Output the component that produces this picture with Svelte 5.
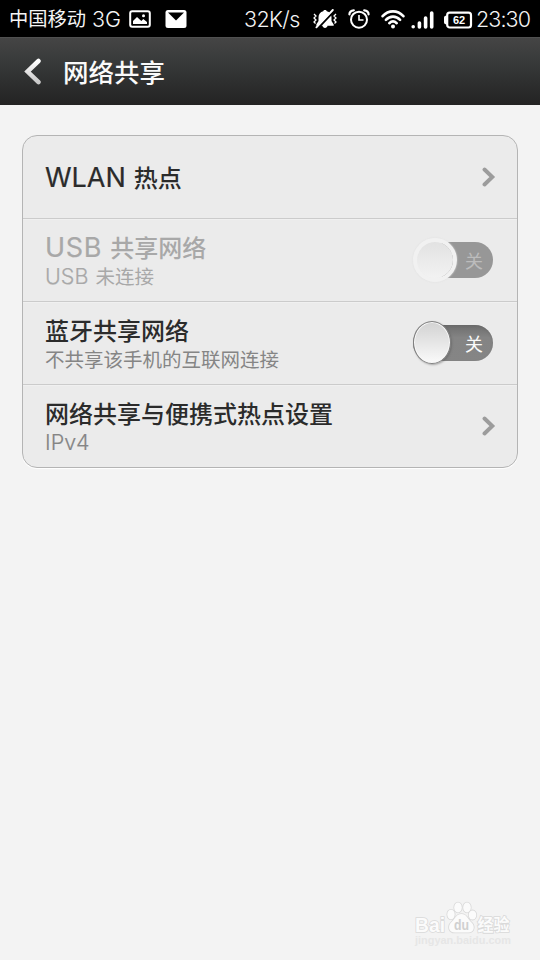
<script>
  const rows = [
    { latin: 'WLAN', title: '热点', kind: 'link' },
    { latin: 'USB', title: '共享网络', subLatin: 'USB', sub: '未连接', kind: 'toggle', disabled: true },
    { title: '蓝牙共享网络', sub: '不共享该手机的互联网连接', kind: 'toggle' },
    { title: '网络共享与便携式热点设置', subLatin: 'IPv4', kind: 'link' },
  ];
</script>

<div class="screen">
  <div class="status">
    <span class="carrier">中国移动</span>
    <span class="lat net">3G</span>
    <svg class="pic" width="22" height="18" viewBox="0 0 22 18">
      <rect x="1.2" y="1.2" width="19.6" height="15.6" rx="2" fill="none" stroke="#fff" stroke-width="2" />
      <path d="M4 14V11L8 7l4.300 4 2-2L18 12v2z" fill="#fff" />
      <circle cx="14.500" cy="5.800" r="1.500" fill="#fff" />
    </svg>
    <svg class="mail" width="22" height="18" viewBox="0 0 22 18">
      <rect x=".5" width="21" height="18" rx="2.500" fill="#fff" />
      <path d="M3 2.600h16L11 10.400z" fill="#000" />
    </svg>
    <span class="lat speed">32K/s</span>
    <svg class="mute" width="24" height="20" viewBox="0 0 24 20">
      <path d="M12 1c1.200 0 1.600.6 1.800 1.300 3 .8 4.700 3 4.700 6v3.700l2.200 3.500v1.300H14.500c-.2 1.400-1.200 2.100-2.500 2.100s-2.300-.7-2.500-2.100H3.300v-1.300L5.500 12V8.300c0-3 1.700-5.200 4.700-6 .2-.7.6-1.300 1.800-1.300z" fill="#fff" />
      <path d="M4.500 19.500L21 2" stroke="#000" stroke-width="2.400" />
      <path d="M3.400 18.300L19.800 1" stroke="#fff" stroke-width="1.900" stroke-linecap="round" />
      <path d="M1 5l2 2-2 2 2 2-2 2 1.500 1.500M23 5l-2 2 2 2-2 2 2 2-1.500 1.500" stroke="#fff" stroke-width="1.300" fill="none" />
    </svg>
    <svg class="alarm" width="22" height="20" viewBox="0 0 22 20">
      <circle cx="11" cy="10.700" r="8" fill="none" stroke="#fff" stroke-width="2" />
      <path d="M11 6v5h4.500" fill="none" stroke="#fff" stroke-width="1.600" />
      <path d="M1.400 5.400C1.500 3 3 1.500 5.800 1.300M20.600 5.400C20.500 3 19 1.500 16.200 1.300" fill="none" stroke="#fff" stroke-width="2.200" stroke-linecap="round" />
    </svg>
    <svg class="wifi" width="24" height="19" viewBox="0 0 24 19">
      <g fill="none" stroke="#fff" stroke-width="2.600" stroke-linecap="round">
        <path d="M1.600 6.200C7.500-.2 16.500-.2 22.400 6.200" />
        <path d="M4.900 9.900c4.200-4.400 10-4.400 14.200 0" />
        <path d="M8.300 13.200c2.300-2.200 5.100-2.200 7.400 0" />
      </g>
      <circle cx="12" cy="16.600" r="2" fill="#fff" />
    </svg>
    <svg class="signal" width="23" height="18" viewBox="0 0 23 18">
      <path d="M2.200 15.700v.1M8.400 12v4M14.600 7v9M20.700 2v14" stroke="#fff" stroke-width="3.600" stroke-linecap="round" />
    </svg>
    <svg class="battery" width="30" height="18" viewBox="0 0 30 18">
      <rect x="4.200" y="1.700" width="23.800" height="14.800" rx="2.500" fill="none" stroke="#fff" stroke-width="2.200" />
      <path d="M4 4.500C1.500 4.500 1 5.500 1 7v4c0 1.500.5 2.500 3 2.500z" fill="#fff" />
      <text x="16" y="12.900" text-anchor="middle">62</text>
    </svg>
    <span class="lat time">23:30</span>
  </div>

  <header>
    <svg width="20" height="28" viewBox="0 0 20 28">
      <defs>
        <linearGradient id="arrow" x1="0" y1="0" x2="0" y2="1"><stop offset="0" stop-color="#fff" /><stop offset="1" stop-color="#c8c8c8" /></linearGradient>
      </defs>
      <path d="M16.500 3L5.500 13.500l11 10.600" fill="none" stroke="url(#arrow)" stroke-width="4.500" stroke-linecap="round" />
    </svg>
    <h1>网络共享</h1>
  </header>

  <main>
    {#each rows as row}
      <section class:disabled={row.disabled}>
        <div class="copy">
          <div class="title">{#if row.latin}<span class="lat">{row.latin}</span>{/if}{row.title}</div>
          {#if row.sub || row.subLatin}
            <div class="sub">{#if row.subLatin}<span class="lat">{row.subLatin}</span>{/if}{row.sub ?? ''}</div>
          {/if}
        </div>
        {#if row.kind === 'link'}
          <svg class="chev" width="14" height="20" viewBox="0 0 14 20"><path d="M2.500 2.500L10.300 10l-7.800 7.500" fill="none" stroke="#9c9c9c" stroke-width="3.900" stroke-linecap="round" /></svg>
        {:else}
          <div class="toggle"><div class="track">关</div><i class="knob"></i></div>
        {/if}
      </section>
    {/each}
  </main>

  <svg class="mark" width="110" height="50" viewBox="0 0 110 50">
    <g fill="#fbfbfb" stroke="#d9d9d9" stroke-width="1.600" paint-order="stroke">
      <text class="brand" x="4" y="33" textLength="30" lengthAdjust="spacingAndGlyphs">Bai</text>
      <ellipse cx="40" cy="15.500" rx="3.700" ry="4.800" /><ellipse cx="47" cy="8.500" rx="3.800" ry="5" />
      <ellipse cx="56" cy="8.500" rx="3.800" ry="5" /><ellipse cx="61.500" cy="16" rx="3.800" ry="4.600" />
      <path d="M50.500 15c5 0 6 4.500 9 7.500 5.500 4.500 3.500 11-2 11H44c-6.500 0-8-6.500-3-11 4-3.500 4-7.500 9.500-7.500z" />
      <text class="jy" x="66.500" y="32" textLength="32" lengthAdjust="spacingAndGlyphs">经验</text>
    </g>
    <text class="du" x="43" y="31" textLength="15" lengthAdjust="spacingAndGlyphs">du</text>
    <text class="url" x="4" y="45" textLength="96" lengthAdjust="spacingAndGlyphs">jingyan.baidu.com</text>
  </svg>
</div>

<style>
  :global(body) { margin: 0; background: #f3f3f3; }
  .screen { position: relative; width: 540px; height: 960px; overflow: hidden; background: #f3f3f3; font-family: 'Noto Sans CJK SC', sans-serif; }
  .lat { font-family: Inter, 'Liberation Sans', sans-serif; }
  .status { height: 37px; background: #000; color: #f5f5f5; display: flex; align-items: center; padding-left: 9px; box-sizing: border-box; white-space: nowrap; }
  .status > * { flex: none; }
  .carrier { width: 83px; font-size: 19.300px; line-height: 37px; font-weight: 400; }
  .net, .speed, .time { font-size: 21.500px; font-weight: 300; line-height: 37px; margin-top: 2px; }
  .net { width: 37px; }
  .mail { margin-left: 14px; }
  .speed { margin-left: 57px; width: 69px; letter-spacing: -.6px; }
  .mute { width: 24px; }
  .alarm { margin-left: 11px; }
  .wifi { margin-left: 11px; margin-top: 1px; }
  .signal { margin-left: 6px; margin-top: 2px; }
  .battery { margin-left: 9px; margin-top: 2px; }
  .battery text { font: bold 11px 'Liberation Sans', sans-serif; fill: #fff; }
  .time { margin-left: 3px; letter-spacing: -.9px; }
  header { height: 68px; display: flex; align-items: center; background: linear-gradient(#454545, #383a3a 35%, #232323); border-top: 1px solid #505050; box-sizing: border-box; padding-left: 22px; }
  h1 { margin: -2px 0 0 21px; color: #fafafa; font-size: 25.500px; font-weight: 500; line-height: 40px; }
  main { margin: 30px 22px 0; height: 333px; box-sizing: border-box; border: 1px solid #b4b4b4; border-radius: 15px; background: #ebebeb; box-shadow: 0 1px 1px #fff; display: flex; flex-direction: column; }
  section { flex: 1; display: flex; align-items: center; justify-content: space-between; padding: 0 22px; box-sizing: border-box; }
  section:first-child { flex: 0 0 82px; }
  section + section { border-top: 1px solid #cbcbcb; box-shadow: inset 0 1px #f0f0f0; }
  .title { color: #2b2b2b; font-size: 24px; line-height: 32px; font-weight: 500; white-space: nowrap; }
  .title .lat { font-size: 27px; font-weight: 400; margin-right: 8px; line-height: 30px; -webkit-text-stroke: .2px currentColor; }
  .sub { color: #858585; font-size: 19.500px; line-height: 26px; font-weight: 400; white-space: nowrap; }
  .sub .lat { font-size: 21.500px; font-weight: 300; line-height: 26px; margin-right: 7px; -webkit-text-stroke: .2px currentColor; }
  .disabled .title .lat { letter-spacing: .7px; }
  .disabled .title, .disabled .sub { color: #a8a8a8; }
  .chev { margin-right: -1px; }
  .toggle { position: relative; width: 80px; height: 44px; display: flex; align-items: center; margin-right: 2px; }
  .track { width: 80px; height: 36px; border-radius: 18px; box-sizing: border-box; padding-left: 52px; background: linear-gradient(#6d6d6d, #848484 35%, #858585); color: #fafafa; font-size: 18px; line-height: 36px; box-shadow: inset 0 1px 2px #6668; }
  .knob { position: absolute; left: 0; top: 0; width: 38px; height: 43px; border-radius: 50%; box-sizing: border-box; border: 1.500px solid #808080; background: linear-gradient(#d2d2d2, #fafafa); box-shadow: inset 0 0 0 1px #f8f8f8, 1px 1px 2px #5557; }
  .disabled .track { margin-left: 18px; width: 62px; padding-left: 34px; background: #979797; color: #bcbcbc; box-shadow: none; }
  .disabled .knob { width: 44px; height: 44px; border: 4px solid #f1f1f1; background: linear-gradient(#e2e2e2, #f2f2f2) padding-box; box-shadow: 0 0 2px #dcdcdc; }
  .mark { position: absolute; left: 411px; top: 899px; }
  .brand { font: bold 20px 'Liberation Sans', sans-serif; }
  .jy { font: bold 16.500px 'Noto Sans CJK SC', sans-serif; }
  .du { font: bold 14px 'Liberation Sans', sans-serif; fill: #d0d0d0; }
  .url { font: bold 10px 'Liberation Sans', sans-serif; fill: #e6e6e6; }
</style>
